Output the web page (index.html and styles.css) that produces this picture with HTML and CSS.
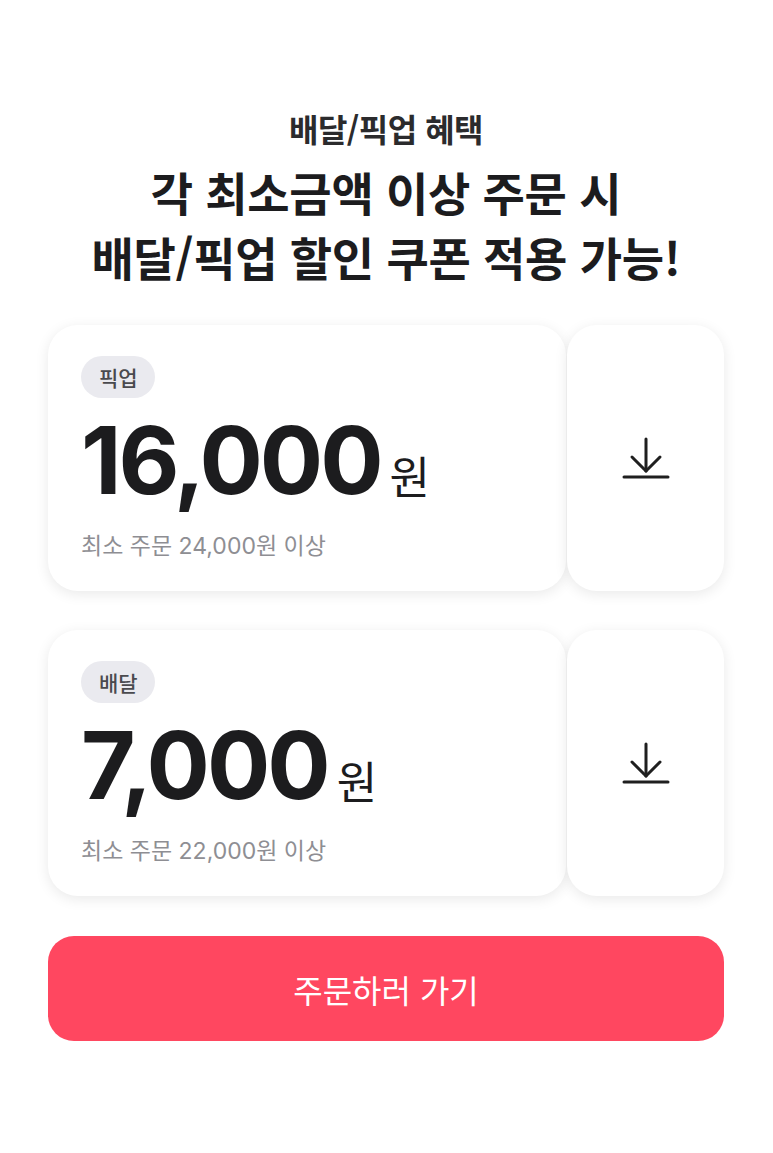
FILE: index.html
```html
<!DOCTYPE html>
<html lang="ko">
<head>
<meta charset="utf-8">
<link rel="stylesheet" href="styles.css">
</head>
<body>
<main class="page">
  <header class="intro">
    <p class="eyebrow">배달/픽업 혜택</p>
    <h1 class="headline">각 최소금액 이상 주문 시<br>배달/픽업 할인 쿠폰 적용 가능!</h1>
  </header>

  <section class="coupons">
    <div class="coupon">
      <div class="coupon-main">
        <span class="badge">픽업</span>
        <div class="amount"><span class="num">16,000</span><span class="unit">원</span></div>
        <p class="cond">최소 주문 24,000원 이상</p>
      </div>
      <button class="coupon-dl" aria-label="쿠폰 다운로드">
        <svg width="48" height="48" viewBox="0 0 48 48" fill="none" stroke="#1f1f1f" stroke-width="3" stroke-linecap="round" stroke-linejoin="round">
          <path d="M24 5v32"/>
          <path d="M10 23l14 14 14-14"/>
          <path d="M2 43h44"/>
        </svg>
      </button>
    </div>

    <div class="coupon">
      <div class="coupon-main">
        <span class="badge">배달</span>
        <div class="amount"><span class="num">7,000</span><span class="unit">원</span></div>
        <p class="cond">최소 주문 22,000원 이상</p>
      </div>
      <button class="coupon-dl" aria-label="쿠폰 다운로드">
        <svg width="48" height="48" viewBox="0 0 48 48" fill="none" stroke="#1f1f1f" stroke-width="3" stroke-linecap="round" stroke-linejoin="round">
          <path d="M24 5v32"/>
          <path d="M10 23l14 14 14-14"/>
          <path d="M2 43h44"/>
        </svg>
      </button>
    </div>
  </section>

  <button class="cta">주문하러 가기</button>
</main>
</body>
</html>
```

FILE: styles.css
```css
* { box-sizing: border-box; }

html, body {
  margin: 0;
  padding: 0;
  background: #ffffff;
}

body {
  font-family: "Inter", "Noto Sans CJK KR", "Noto Sans", sans-serif;
  color: #1b1b1d;
}

.page {
  width: 773px;
  padding: 106px 49px 0 48px;
  display: flex;
  flex-direction: column;
}

.intro {
  display: flex;
  flex-direction: column;
  align-items: center;
  text-align: center;
}

.eyebrow {
  margin: 0;
  font-family: "Noto Sans CJK KR", sans-serif;
  font-size: 32px;
  line-height: 44px;
  font-weight: 700;
  color: #2b2b2d;
  letter-spacing: -0.5px;
}

.headline {
  margin: 9px 0 0;
  font-family: "Noto Sans CJK KR", sans-serif;
  font-size: 46px;
  line-height: 65px;
  font-weight: 700;
  color: #1c1c1e;
  letter-spacing: -0.3px;
}

.coupons {
  margin-top: 36px;
  display: flex;
  flex-direction: column;
  gap: 39px;
}

.coupon {
  display: flex;
  height: 266px;
}

.coupon-main {
  flex: 1;
  background: #fff;
  border-radius: 30px;
  box-shadow: 0 3px 14px rgba(0, 0, 0, 0.09);
  padding: 31px 0 0 33px;
  display: flex;
  flex-direction: column;
  align-items: flex-start;
}

.coupon-dl {
  width: 157px;
  margin-left: 1px;
  background: #fff;
  border: none;
  border-radius: 30px;
  box-shadow: 0 3px 14px rgba(0, 0, 0, 0.09);
  display: flex;
  align-items: center;
  justify-content: center;
  padding: 0;
  cursor: pointer;
}

.badge {
  display: inline-flex;
  align-items: center;
  height: 42px;
  padding: 0 17px 0 18px;
  border-radius: 21px;
  background: #eaeaef;
  color: #4a4a4e;
  font-family: "Noto Sans CJK KR", sans-serif;
  font-size: 21px;
  font-weight: 500;
}

.amount {
  display: flex;
  align-items: baseline;
  margin-top: 12px;
  height: 100px;
}

.num {
  font-size: 94px;
  line-height: 100px;
  font-weight: 700;
  letter-spacing: -3px;
  color: #1c1c1e;
}

.unit {
  margin-left: 9px;
  font-family: "Noto Sans CJK KR", sans-serif;
  font-size: 44px;
  font-weight: 400;
  color: #1c1c1e;
}

.cond {
  margin: 22px 0 0;
  font-size: 23px;
  line-height: 28px;
  color: #8e8e93;
  letter-spacing: 0;
}

.cta {
  margin-top: 40px;
  height: 105px;
  border: none;
  border-radius: 26px;
  background: #ff4760;
  color: #ffffff;
  font-family: "Noto Sans CJK KR", sans-serif;
  font-size: 32px;
  font-weight: 400;
  cursor: pointer;
}
```
